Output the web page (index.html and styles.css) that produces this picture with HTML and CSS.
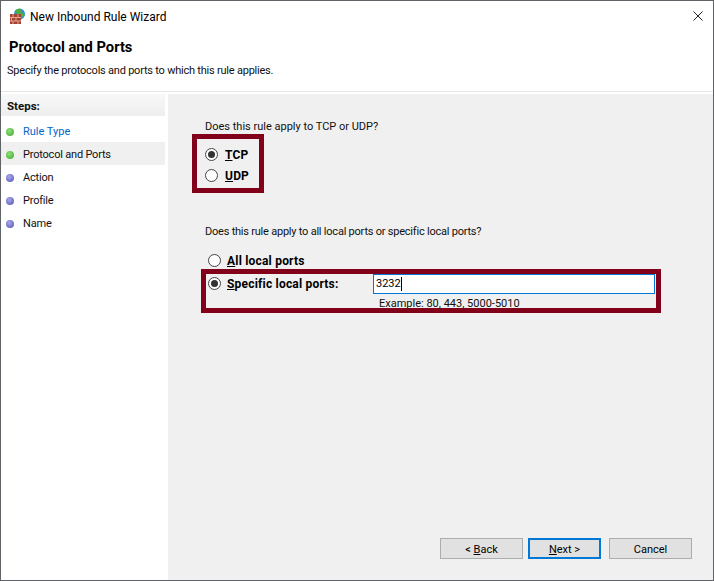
FILE: index.html
```html
<!DOCTYPE html>
<html lang="en">
<head>
<meta charset="utf-8">
<title>New Inbound Rule Wizard</title>
<link rel="stylesheet" href="styles.css">
</head>
<body>
<div class="window">
  <div class="titlebar">
    <svg class="app-icon" width="17" height="17" viewBox="0 0 17 17">
      <circle cx="10.5" cy="6" r="5.500" fill="#2f8fd8"/>
      <path d="M6 2.500 Q9 0 12 1 Q11 3.500 13 4.500 Q15 5.500 16 7.500 Q14 9 12 8.500 Q9 7.500 8 6 Z" fill="#4fae3c"/>
      <rect x="1" y="6" width="11" height="10" fill="#a8402f"/>
      <path d="M1 9.500H12M1 13H12M4 6V9.500M9 6V9.500M2.500 9.500V13M7 9.500V13M4 13V16M9 13V16" stroke="#dfa896" stroke-width="1" fill="none"/>
    </svg>
    <span class="title">New Inbound Rule Wizard</span>
    <svg class="close" width="10" height="10" viewBox="0 0 10 10"><path d="M.5.5l9 9M9.500.5l-9 9" stroke="#222" stroke-width="1" fill="none"/></svg>
  </div>
  <header class="head">
    <h1 class="heading">Protocol and Ports</h1>
    <p class="sub">Specify the protocols and ports to which this rule applies.</p>
  </header>
  <div class="body">
    <nav class="steps">
      <div class="steps-head">Steps:</div>
      <ul class="step-list">
        <li class="step"><i class="dot green"></i><span class="link">Rule Type</span></li>
        <li class="step current"><i class="dot green"></i>Protocol and Ports</li>
        <li class="step"><i class="dot blue"></i>Action</li>
        <li class="step"><i class="dot blue"></i>Profile</li>
        <li class="step"><i class="dot blue"></i>Name</li>
      </ul>
    </nav>
    <main class="pane">
      <p class="question q1">Does this rule apply to TCP or UDP?</p>
      <div class="mark mark-proto">
        <div class="opt"><i class="radio on"></i><b class="label"><u>T</u>CP</b></div>
        <div class="opt"><i class="radio"></i><b class="label"><u>U</u>DP</b></div>
      </div>
      <p class="question q2">Does this rule apply to all local ports or specific local ports?</p>
      <div class="opt all"><i class="radio"></i><b class="label label-port"><u>A</u>ll local ports</b></div>
      <div class="mark mark-ports">
        <div class="ports-row">
          <i class="radio on"></i><b class="label label-port ports-label"><u>S</u>pecific local ports:</b>
          <div class="input">3232<span class="caret"></span></div>
        </div>
        <div class="example">Example: 80, 443, 5000-5010</div>
      </div>
      <div class="buttons">
        <div class="btn back">&lt; <u>B</u>ack</div>
        <div class="btn next"><u>N</u>ext &gt;</div>
        <div class="btn cancel">Cancel</div>
      </div>
    </main>
  </div>
</div>
</body>
</html>
```
FILE: styles.css
```css
* { box-sizing: border-box; }
html, body { margin: 0; padding: 0; }
body {
  width: 714px;
  height: 581px;
  overflow: hidden;
  font-family: Roboto, "Open Sans", sans-serif;
  font-size: 11px;
  color: #111;
}
.window {
  width: 714px;
  height: 581px;
  display: flex;
  flex-direction: column;
  background: #fff;
  border: 1px solid #5f6368;
}
.titlebar {
  display: flex;
  align-items: center;
  height: 30px;
  padding: 0 10px 0 8px;
  flex: none;
}
.app-icon { flex: none; margin-right: 4px; }
.title { font-size: 12px; color: #000; margin-top: 2px; }
.close { margin-left: auto; }
.head {
  height: 61px;
  flex: none;
  border-bottom: 1px solid #e6e6e6;
  padding-left: 6px;
}
.heading { margin: 7px 0 0 2px; font-size: 14.700px; line-height: 18px; font-weight: 700; color: #000; }
.sub { margin: 7px 0 0; line-height: 16px; letter-spacing: -.22px; }
.body { flex: 1; display: flex; padding-top: 2px; min-height: 0; }
.steps { width: 164px; flex: none; margin-right: 3px; }
.steps-head {
  height: 22px;
  line-height: 24px;
  padding-left: 6px;
  font-weight: 700;
  font-size: 11.500px;
  background: linear-gradient(#f8f8f8, #eeeeee);
}
.step-list { list-style: none; margin: 3px 0 0; padding: 0; }
.step {
  display: flex;
  align-items: center;
  height: 23px;
  padding: 2px 0 0 5px;
  letter-spacing: -.2px;
}
.step.current { background: #f0f0f0; }
.dot { width: 8px; height: 8px; border-radius: 50%; margin-right: 9px; flex: none; }
.green { background: radial-gradient(circle at 40% 35%, #8fe07a, #3fa82e); }
.blue { background: radial-gradient(circle at 40% 35%, #a9a9e8, #5050b8); }
.link { color: #0066cc; letter-spacing: 0; }
.pane {
  flex: 1;
  display: flex;
  flex-direction: column;
  background: #f0f0f0;
  padding-left: 24px;
  min-width: 0;
}
.question { margin: 0; line-height: 16px; }
.q1 { margin: 25px 0 0 13px; }
.mark { border: 5px solid #82001a; }
.mark-proto {
  width: 72px;
  height: 59px;
  margin-top: -1px;
  padding: 5px 0 0 8px;
}
.opt { display: flex; align-items: center; height: 21px; }
.radio {
  width: 13px;
  height: 13px;
  flex: none;
  border-radius: 50%;
  border: 1px solid #444;
  background: #fff;
  position: relative;
}
.radio.on::after {
  content: "";
  position: absolute;
  left: 2px;
  top: 2px;
  width: 7px;
  height: 7px;
  border-radius: 50%;
  background: #333;
}
.label { font-weight: 700; font-size: 12px; color: #000; margin-left: 7px; letter-spacing: .2px; }
.label-port { margin-left: 6px; }
.q2 { margin: 31px 0 0 13px; letter-spacing: -.22px; }
.all { margin: 10px 0 0 16px; }
.mark-ports {
  width: 460px;
  height: 44px;
  margin: -2px 0 0 9px;
}
.ports-row { display: flex; align-items: center; height: 20px; padding-left: 2px; }
.ports-row .radio { margin-top: -2px; }
.ports-label { width: 146px; margin-top: -1px; }
.input {
  width: 282px;
  height: 20px;
  background: #fff;
  border: 1px solid #0078d7;
  padding-left: 2px;
  line-height: 18px;
  font-size: 11px;
  display: flex;
  align-items: center;
  color: #000;
}
.caret { width: 1px; height: 14px; background: #000; }
.example { margin: 2px 0 0 173px; line-height: 16px; }
.buttons {
  display: flex;
  margin: auto 0 21px 248px;
}
.btn {
  height: 21px;
  padding-top: 1px;
  border: 1px solid #adadad;
  background: #e1e1e1;
  color: #000;
  display: flex;
  align-items: center;
  justify-content: center;
  white-space: pre;
}
.back { width: 83px; margin-right: 5px; }
.next { width: 73px; margin-right: 8px; border: 2px solid #0078d7; }
.cancel { width: 83px; }
```
